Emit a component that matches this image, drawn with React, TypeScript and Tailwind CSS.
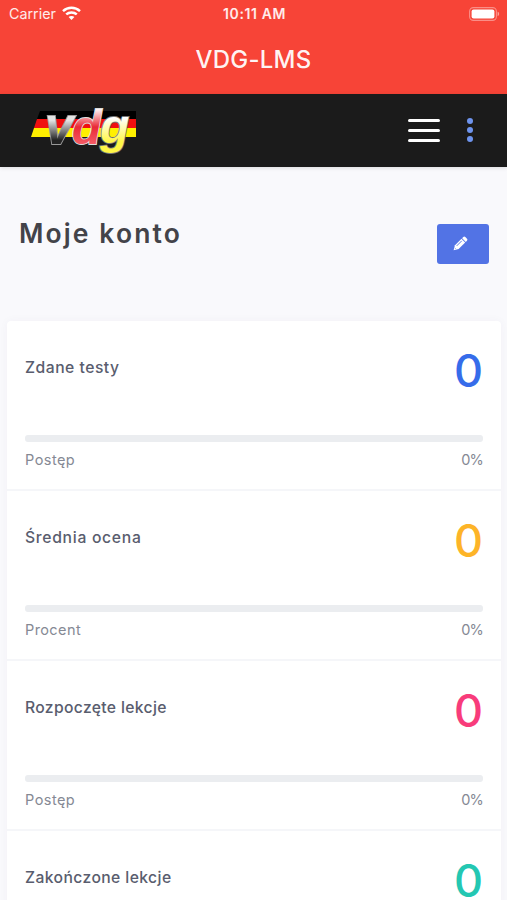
interface Stat {
  title: string;
  value: number;
  caption: string;
  percent: number;
  color: string;
  tracking: string;
  captionTracking: string;
}

const STATS: Stat[] = [
  {
    title: "Zdane testy",
    value: 0,
    caption: "Postęp",
    percent: 0,
    color: "text-[#366cea]",
    tracking: "tracking-[0.5px]",
    captionTracking: "tracking-[0.45px]",
  },
  {
    title: "Średnia ocena",
    value: 0,
    caption: "Procent",
    percent: 0,
    color: "text-[#fdb428]",
    tracking: "tracking-[0.7px]",
    captionTracking: "tracking-[0.4px]",
  },
  {
    title: "Rozpoczęte lekcje",
    value: 0,
    caption: "Postęp",
    percent: 0,
    color: "text-[#f83c7b]",
    tracking: "tracking-[0.34px]",
    captionTracking: "tracking-[0.45px]",
  },
  {
    title: "Zakończone lekcje",
    value: 0,
    caption: "Postęp",
    percent: 0,
    color: "text-[#24c7b2]",
    tracking: "tracking-[0.4px]",
    captionTracking: "tracking-[0.45px]",
  },
];

function WifiIcon() {
  return (
    <svg width="19" height="15" viewBox="0 0 19 15" fill="none" stroke="#fff" strokeWidth="2.5">
      <path d="M1 5.1C5.8.7 13.2.7 18 5.1" />
      <path d="M4.2 8.4c3-2.7 7.6-2.7 10.6 0" />
      <path d="M9.5 14 6.6 11c1.6-1.4 4.2-1.4 5.8 0Z" fill="#fff" stroke="none" />
    </svg>
  );
}

function BatteryIcon() {
  return (
    <svg width="31" height="14" viewBox="0 0 31 14">
      <rect x=".6" y=".6" width="26.8" height="12.8" rx="3.8" fill="none" stroke="#fff" strokeOpacity=".4" strokeWidth="1.1" />
      <rect x="2.6" y="2.5" width="22.8" height="9" rx="2" fill="#fff" />
      <path d="M28.6 4.8c2 .6 2 3.8 0 4.4Z" fill="#fff" fillOpacity=".5" />
    </svg>
  );
}

function StatusBar() {
  return (
    <div className="grid h-[27px] grid-cols-[1fr_auto_1fr] items-center pr-[7px] pl-[9px] text-white">
      <div className="flex items-center gap-[6px] text-[14.3px] text-white/90">
        Carrier
        <WifiIcon />
      </div>
      <span className="text-[14px] font-semibold tracking-[0.6px] whitespace-nowrap text-white/90">
        10:11 AM
      </span>
      <div className="flex justify-end">
        <BatteryIcon />
      </div>
    </div>
  );
}

/** Wordmark over a slanted black, red and gold flag. */
function Logo() {
  return (
    <svg width="108" height="60" viewBox="0 -4 108 60" className="overflow-visible">
      <defs>
        <linearGradient id="silver" x1="0" y1="0" x2="0" y2="1">
          <stop offset=".4" stopColor="#e4e4e4" />
          <stop offset=".75" stopColor="#222" />
        </linearGradient>
        <linearGradient id="red" x1="0" y1="0" x2="0" y2="1">
          <stop offset=".15" stopColor="#fff" />
          <stop offset=".5" stopColor="#ea2a36" />
          <stop offset=".85" stopColor="#f5606a" />
        </linearGradient>
        <linearGradient id="gold" x1="0" y1="0" x2="0" y2="1">
          <stop offset=".35" stopColor="#fff" />
          <stop offset=".8" stopColor="#fff645" />
        </linearGradient>
      </defs>
      <path d="M9 6h96v8H6Z" fill="#000" />
      <path d="M6 14h99v9H3Z" fill="#f01010" />
      <path d="M3 23h102v9H0Z" fill="#fff000" />
      <g
        fontFamily="Liberation Sans, sans-serif"
        fontWeight="700"
        fontStyle="italic"
        strokeWidth="1.8"
        paintOrder="stroke"
      >
        <text x="14" y="38.5" fontSize="51" fill="url(#silver)" stroke="#999">v</text>
        <text x="41" y="38.5" fontSize="48" fill="url(#red)" stroke="#ddd">d</text>
        <text x="69" y="37.5" fontSize="48" fill="url(#gold)" stroke="#777">g</text>
      </g>
    </svg>
  );
}

function PencilIcon() {
  return (
    <svg width="16" height="16" viewBox="0 0 16 16">
      <g transform="rotate(45 8 8)">
        <path d="M5.4.8Q5.4-.7 6.8-.7h2.4q1.4 0 1.4 1.5v1.6H5.4Z" fill="#fff" />
        <path d="M5.4 3.3h5.2v9.2L8 17l-2.6-4.5Z" fill="#fff" />
        <path d="M7 4.5v7.2M8 14.3v.7" stroke="#5273e5" strokeWidth=".9" />
      </g>
    </svg>
  );
}

function StatRow({ stat }: { stat: Stat }) {
  return (
    <li className="h-[170px] border-b-2 border-[#f5f6f9] px-[18px] pt-[26px]">
      <div className="flex h-[88px] items-start justify-between">
        <h2 className={`pt-[9px] text-[15.7px] leading-6 font-medium text-[#595d6e] ${stat.tracking}`}>
          {stat.title}
        </h2>
        <span className={`text-[45px] leading-[48px] font-medium ${stat.color}`}>
          {stat.value}
        </span>
      </div>
      <div className="h-[7px] overflow-hidden rounded-[3px] bg-[#ebedf0]">
        <div className="h-full bg-[#366cea]" style={{ width: `${stat.percent}%` }} />
      </div>
      <div className="flex justify-between pt-[8px] text-[14.5px] leading-5 text-[#858994]">
        <span className={stat.captionTracking}>{stat.caption}</span>
        <span className="tracking-[-0.8px]">{stat.percent}%</span>
      </div>
    </li>
  );
}

export default function App() {
  return (
    <div className="flex h-[900px] w-full flex-col overflow-hidden bg-[#f9f9fc] font-[Inter,sans-serif]">
      <header className="h-[94px] shrink-0 bg-[#f74437]">
        <StatusBar />
        <h1 className="pt-[15px] text-center text-[24px] leading-9 font-medium tracking-[0.2px] text-white/95">
          VDG-LMS
        </h1>
      </header>

      <nav className="flex h-[73px] shrink-0 items-center bg-[#1b1b1b] pr-[34px] pl-[31px] shadow-[0_1px_4px_rgba(0,0,0,0.12)]">
        <Logo />
        <button type="button" aria-label="Menu" className="ml-auto flex w-8 flex-col gap-[7.5px]">
          <span className="h-[2.5px] rounded-full bg-white" />
          <span className="h-[2.5px] rounded-full bg-white" />
          <span className="h-[2.5px] rounded-full bg-white" />
        </button>
        <button type="button" aria-label="Więcej" className="mb-[2px] ml-[27px] flex flex-col gap-[3px]">
          <span className="size-[6px] rounded-full bg-[#6e94ee]" />
          <span className="size-[6px] rounded-full bg-[#6e94ee]" />
          <span className="size-[6px] rounded-full bg-[#6e94ee]" />
        </button>
      </nav>

      <div className="flex h-[154px] shrink-0 items-start justify-between pr-[18px] pl-[19px]">
        <h2 className="pt-[48px] text-[26.5px] leading-9 font-semibold tracking-[2.1px] text-[#434349]">
          Moje konto
        </h2>
        <button
          type="button"
          aria-label="Edytuj"
          className="mt-[57px] flex h-10 w-[52px] items-center justify-center rounded-[3px] bg-[#5273e5] pr-[7px]"
        >
          <PencilIcon />
        </button>
      </div>

      <ul className="mr-[6px] ml-[7px] rounded-t-[4px] bg-white shadow-[0_0_10px_rgba(82,63,105,0.04)]">
        {STATS.map((stat) => (
          <StatRow key={stat.title} stat={stat} />
        ))}
      </ul>
    </div>
  );
}
